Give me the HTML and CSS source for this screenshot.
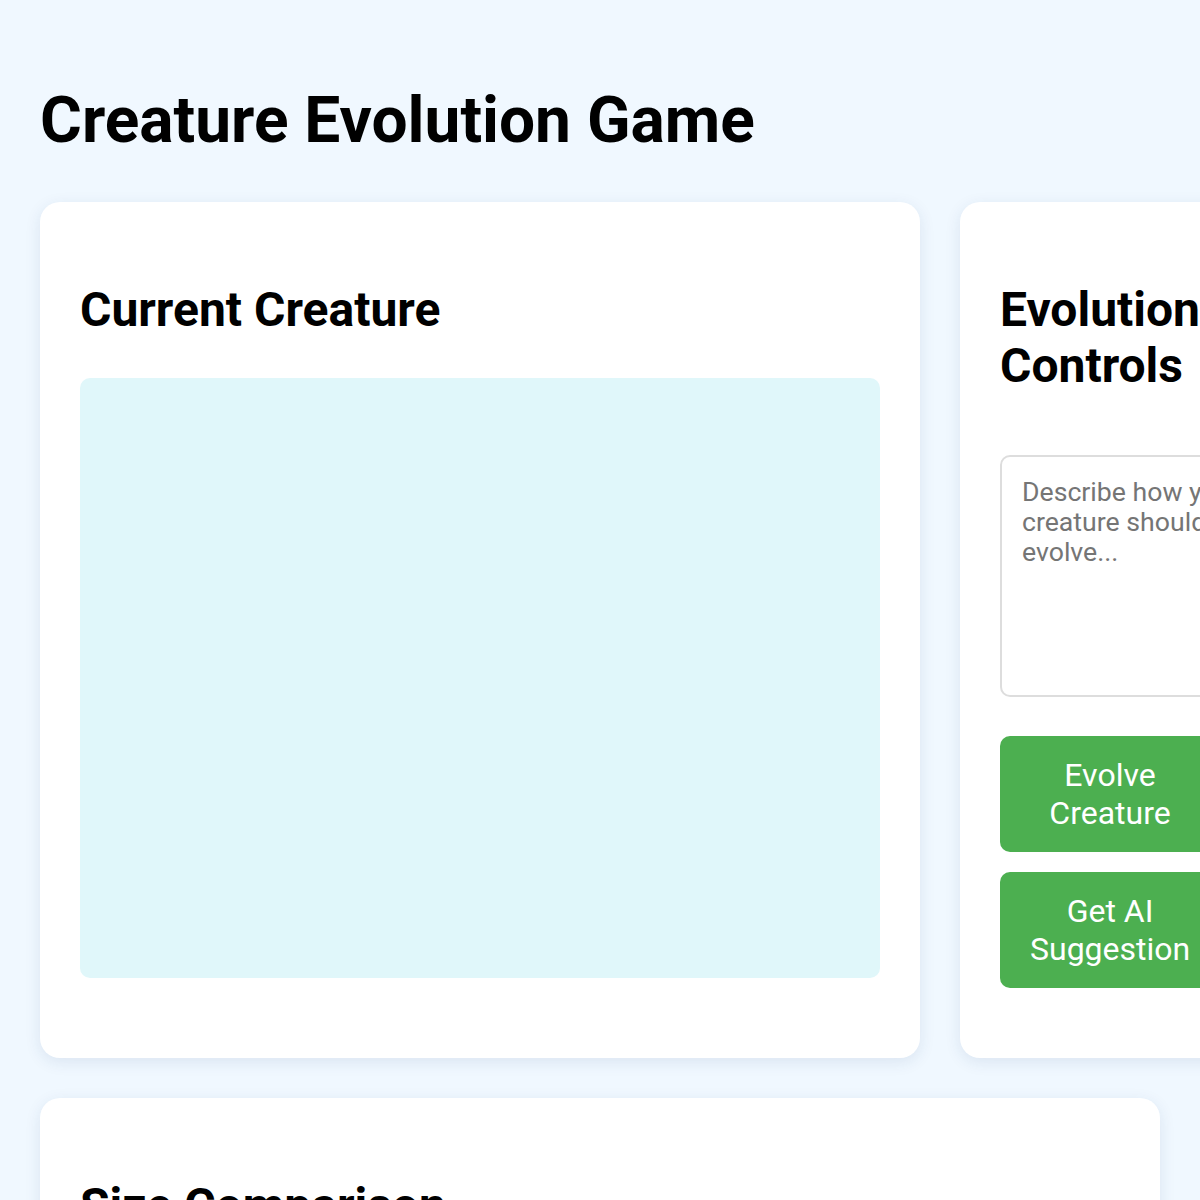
FILE: index.html
```html
<!DOCTYPE html>
<html lang="en">

<head>
    <meta charset="UTF-8">
    <meta name="viewport" content="width=device-width, initial-scale=1.0">
    <title>Creature Evolution Game</title>
    <link rel="stylesheet" href="styles.css">
</head>

<body>
    <h1>Creature Evolution Game</h1>

    <div class="game">
        <section class="card">
            <h2>Current Creature</h2>
            <div class="creature-view"></div>
        </section>

        <section class="card controls">
            <h2>Evolution Controls</h2>
            <textarea class="prompt" placeholder="Describe how your creature should evolve..."></textarea>
            <button class="btn btn-evolve">Evolve Creature</button>
            <button class="btn">Get AI Suggestion</button>
        </section>
    </div>

    <section class="card size-card">
        <h2>Size Comparison</h2>
        <div class="size-chart"></div>
    </section>
</body>

</html>
```

FILE: styles.css
```css
* {
    box-sizing: border-box;
}

body {
    margin: 0;
    padding: 40px;
    background-color: #f0f8ff;
    font-family: Roboto, 'Liberation Sans', Arial, sans-serif;
    color: #000;
}

h1 {
    font-size: 64px;
    font-weight: 700;
    margin: 43px 0 44px;
    line-height: 75px;
}

h2 {
    font-size: 48px;
    font-weight: 700;
    margin: 40px 0;
    line-height: 56px;
}

.game {
    display: grid;
    grid-template-columns: 1fr 300px;
    gap: 40px;
    margin-bottom: 40px;
}

.card {
    background-color: #fff;
    border-radius: 20px;
    padding: 40px;
    box-shadow: 0 4px 16px rgba(30, 60, 120, 0.1);
}

.creature-view {
    width: 800px;
    height: 600px;
    background-color: #e0f7fa;
    border-radius: 10px;
    margin-bottom: 40px;
}

.controls {
    display: flex;
    flex-direction: column;
}

/* content-box on purpose: the field runs past the card like the original */
.prompt {
    display: block;
    box-sizing: content-box;
    width: 100%;
    height: 198px;
    margin: 21px 0 39px;
    padding: 20px;
    border: 2px solid #ddd;
    border-radius: 10px;
    font-family: Roboto, 'Liberation Sans', Arial, sans-serif;
    font-size: 26.67px;
    line-height: 30px;
    resize: none;
}

.prompt::placeholder {
    color: #757575;
}

.btn {
    width: 100%;
    padding: 20px 30px;
    border: none;
    border-radius: 10px;
    background-color: #4caf50;
    color: #fff;
    font-family: Roboto, 'Liberation Sans', Arial, sans-serif;
    font-size: 32px;
    line-height: 38px;
    cursor: pointer;
}

.btn-evolve {
    margin-bottom: 20px;
}

.size-card {
    width: 1120px;
}

.size-chart {
    height: 300px;
}
```
